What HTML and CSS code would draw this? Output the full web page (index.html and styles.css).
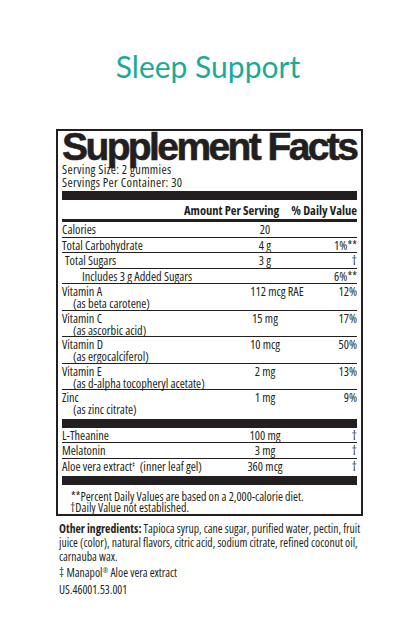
FILE: index.html
```html
<!DOCTYPE html>
<html lang="en">
<head>
    <meta charset="UTF-8">
    <meta name="viewport" content="width=device-width, initial-scale=1.0">
    <title>Sleep Support</title>
    <link rel="stylesheet" href="styles.css">
</head>
<body>
    <!-- Product title -->
    <h1 class="product-title">Sleep Support</h1>

    <!-- Supplement facts label -->
    <div class="facts">
        <h2 class="facts-title">Supplement Facts</h2>
        <div class="serving">Serving Size: 2 gummies</div>
        <div class="serving">Servings Per Container: 30</div>

        <div class="bar"></div>

        <div class="row head">
            <span class="name"></span>
            <span class="amount">Amount Per Serving</span>
            <span class="dv">% Daily Value</span>
        </div>
        <div class="rule"></div>

        <div class="row">
            <span class="name">Calories</span>
            <span class="amount">20</span>
            <span class="dv"></span>
        </div>
        <div class="row">
            <span class="name">Total Carbohydrate</span>
            <span class="amount">4 g</span>
            <span class="dv">1%**</span>
        </div>
        <div class="row sub">
            <span class="name">Total Sugars</span>
            <span class="amount">3 g</span>
            <span class="dv">&dagger;</span>
        </div>
        <div class="row subsub">
            <span class="name">Includes 3 g Added Sugars</span>
            <span class="amount"></span>
            <span class="dv">6%**</span>
        </div>
        <div class="row">
            <span class="name">Vitamin A<span class="source">(as beta carotene)</span></span>
            <span class="amount">112 mcg<span class="extra"> RAE</span></span>
            <span class="dv">12%</span>
        </div>
        <div class="row">
            <span class="name">Vitamin C<span class="source">(as ascorbic acid)</span></span>
            <span class="amount">15 mg</span>
            <span class="dv">17%</span>
        </div>
        <div class="row">
            <span class="name">Vitamin D<span class="source">(as ergocalciferol)</span></span>
            <span class="amount">10 mcg</span>
            <span class="dv">50%</span>
        </div>
        <div class="row">
            <span class="name">Vitamin E<span class="source">(as d-alpha tocopheryl acetate)</span></span>
            <span class="amount">2 mg</span>
            <span class="dv">13%</span>
        </div>
        <div class="row last">
            <span class="name">Zinc<span class="source">(as zinc citrate)</span></span>
            <span class="amount">1 mg</span>
            <span class="dv">9%</span>
        </div>

        <div class="bar"></div>

        <div class="row">
            <span class="name">L-Theanine</span>
            <span class="amount">100 mg</span>
            <span class="dv">&dagger;</span>
        </div>
        <div class="row">
            <span class="name">Melatonin</span>
            <span class="amount">3 mg</span>
            <span class="dv">&dagger;</span>
        </div>
        <div class="row last">
            <span class="name">Aloe vera extract<sup>&Dagger;</sup>&nbsp; (inner leaf gel)</span>
            <span class="amount">360 mcg</span>
            <span class="dv">&dagger;</span>
        </div>

        <div class="bar"></div>

        <div class="notes">
            <p class="first">**Percent Daily Values are based on a 2,000-calorie diet.</p>
            <p>&dagger;Daily Value not established.</p>
        </div>
    </div>

    <!-- Ingredients below the label -->
    <div class="ingredients">
        <p><b>Other ingredients:</b> Tapioca syrup, cane sugar, purified water, pectin, fruit juice (color), natural flavors, citric acid, sodium citrate, refined coconut oil, carnauba wax.</p>
        <p class="gap">&Dagger; Manapol<sup>&reg;</sup> Aloe vera extract</p>
        <p class="code">US.46001.53.001</p>
    </div>
</body>
</html>
```

FILE: styles.css
```css
/* Reset */
* {
    margin: 0;
    padding: 0;
    box-sizing: border-box;
}

body {
    width: 416px;
    background: #ffffff;
    color: #231f20;
    font-family: "Open Sans", "Liberation Sans", Arial, sans-serif;
    font-stretch: condensed;
    font-weight: 500;
}

/* Title */
.product-title {
    padding-top: 48px;
    text-align: center;
    font-family: Lato, "Open Sans", sans-serif;
    font-stretch: normal;
    font-weight: 400;
    font-size: 30px;
    line-height: 36px;
    color: #1aab96;
}

/* Label box */
.facts {
    margin: 45px 0 0 56px;
    width: 307px;
    border: 2px solid #231f20;
    padding: 0 4px;
    font-size: 12.3px;
    line-height: 12px;
}

.facts-title {
    font-family: "Liberation Sans", Arial, sans-serif;
    font-stretch: normal;
    font-weight: bold;
    font-size: 39px;
    letter-spacing: -2.6px;
    line-height: 32px;
    white-space: nowrap;
    -webkit-text-stroke: 0.6px #231f20;
}

.serving {
    font-size: 12.5px;
    letter-spacing: 0.3px;
    line-height: 13px;
}

.bar {
    height: 9px;
    background: #231f20;
    margin-top: 2px;
}

.row + .bar {
    margin-top: 3px;
}

.rule {
    height: 3px;
    background: #231f20;
}

/* Rows */
.row {
    display: flex;
    align-items: flex-start;
    padding: 2px 0 0.5px;
    border-bottom: 1px solid #231f20;
}

.row.last {
    border-bottom: none;
}

.row.head {
    border-bottom: none;
    font-weight: bold;
    font-size: 12.5px;
    padding: 3.5px 0 2.5px;
    line-height: 13px;
}

.row.sub {
    margin-left: 18px;
}

.row.sub .name {
    margin-left: -15px;
}

.row.subsub .name {
    padding-left: 20px;
}

.name {
    flex: 1;
}

.source {
    display: block;
    padding-left: 11px;
    line-height: 11px;
}

.amount {
    width: 84px;
    text-align: center;
}

.head .amount {
    width: auto;
    padding-right: 12px;
}

.head .dv {
    width: auto;
}

.extra {
    margin-right: -24px;
}

.dv {
    width: 50px;
    text-align: right;
}

sup {
    font-size: 7px;
    vertical-align: 4px;
    line-height: 0;
}

/* Footnotes */
.notes {
    padding: 6px 0 1px 8px;
    font-size: 12px;
    line-height: 11px;
}

.notes .first {
    padding-left: 1px;
}

/* Ingredients */
.ingredients {
    margin: 5px 0 0 59px;
    width: 305px;
    font-size: 11.7px;
    line-height: 14px;
}

.gap {
    margin-top: 2px;
}

.code {
    margin-top: 3px;
}
```
